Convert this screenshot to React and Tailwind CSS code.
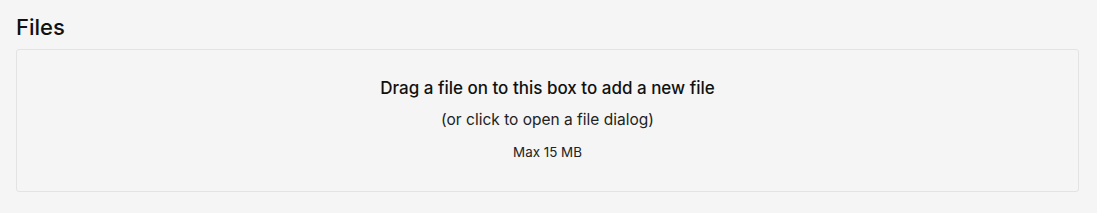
export default function App() {
  return (
    <div className="min-h-[213px] bg-[#f5f5f5] pl-4 pr-[18px] pt-[13px] font-['Inter','Liberation_Sans',Arial,sans-serif] text-[#111]">
      <h4 className="text-[22px] leading-[28px] font-medium mb-2">Files</h4>
      <div className="h-[143px] border border-[#e3e3e3] rounded-[3px] flex flex-col items-center pt-[28px] cursor-pointer">
        <p className="text-[17px] leading-[20px] font-medium text-[#111]">Drag a file on to this box to add a new file</p>
        <p className="text-[15.5px] leading-[18px] mt-[13px] text-[#222]">(or click to open a file dialog)</p>
        <p className="text-[13.4px] leading-[16px] mt-[15px] text-[#222]">Max 15 MB</p>
      </div>
    </div>
  );
}
